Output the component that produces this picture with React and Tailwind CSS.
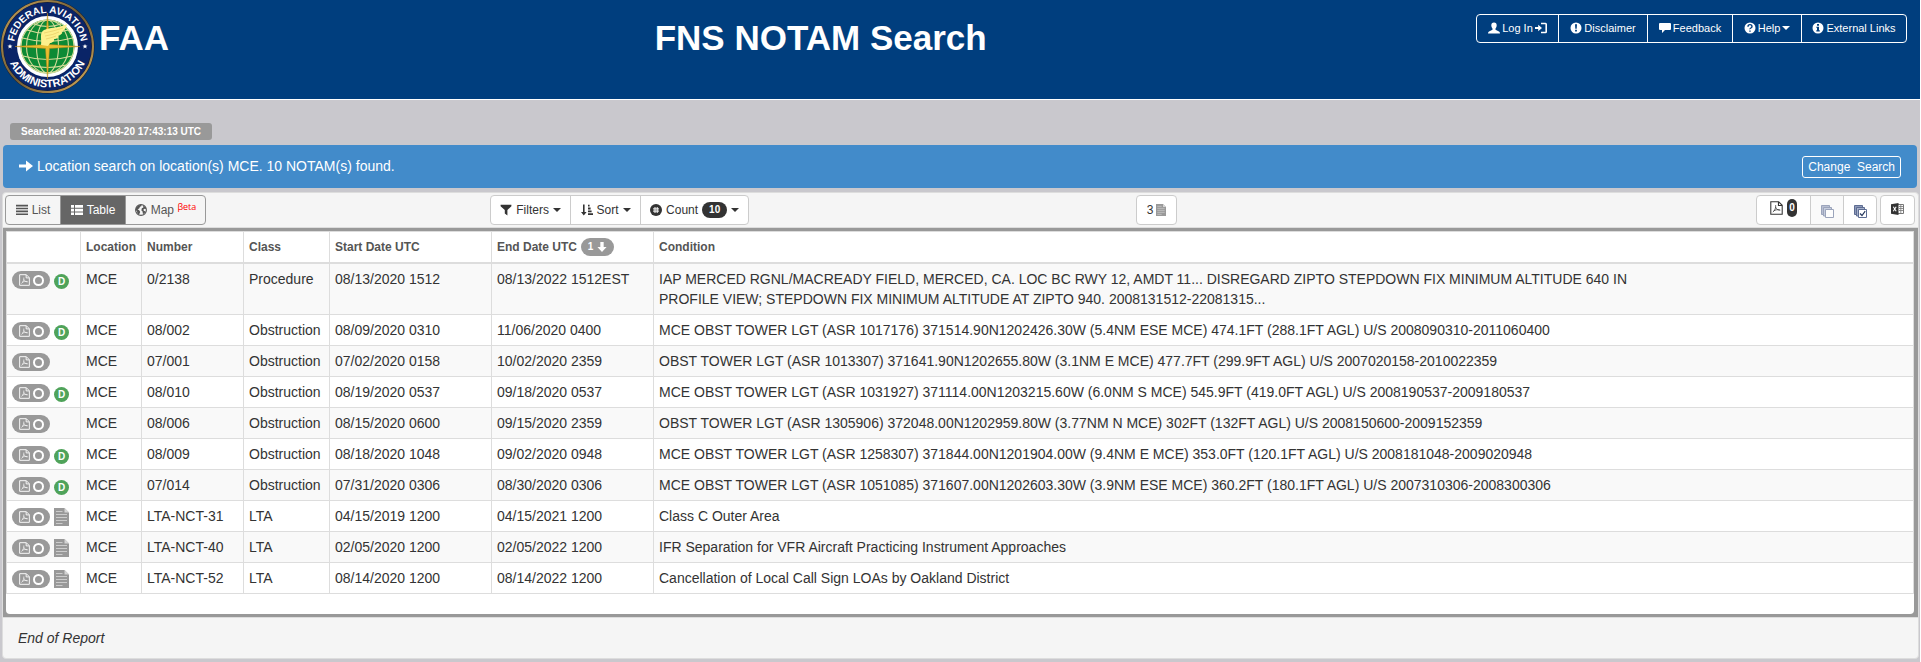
import React from "react";

const notams = [
  ["D", "0/2138", "Procedure", "08/13/2020 1512", "08/13/2022 1512EST", "IAP MERCED RGNL/MACREADY FIELD, MERCED, CA. LOC BC RWY 12, AMDT 11... DISREGARD ZIPTO STEPDOWN FIX MINIMUM ALTITUDE 640 IN PROFILE VIEW; STEPDOWN FIX MINIMUM ALTITUDE AT ZIPTO 940. 2008131512-22081315..."],
  ["D", "08/002", "Obstruction", "08/09/2020 0310", "11/06/2020 0400", "MCE OBST TOWER LGT (ASR 1017176) 371514.90N1202426.30W (5.4NM ESE MCE) 474.1FT (288.1FT AGL) U/S 2008090310-2011060400"],
  ["", "07/001", "Obstruction", "07/02/2020 0158", "10/02/2020 2359", "OBST TOWER LGT (ASR 1013307) 371641.90N1202655.80W (3.1NM E MCE) 477.7FT (299.9FT AGL) U/S 2007020158-2010022359"],
  ["D", "08/010", "Obstruction", "08/19/2020 0537", "09/18/2020 0537", "MCE OBST TOWER LGT (ASR 1031927) 371114.00N1203215.60W (6.0NM S MCE) 545.9FT (419.0FT AGL) U/S 2008190537-2009180537"],
  ["", "08/006", "Obstruction", "08/15/2020 0600", "09/15/2020 2359", "OBST TOWER LGT (ASR 1305906) 372048.00N1202959.80W (3.77NM N MCE) 302FT (132FT AGL) U/S 2008150600-2009152359"],
  ["D", "08/009", "Obstruction", "08/18/2020 1048", "09/02/2020 0948", "MCE OBST TOWER LGT (ASR 1258307) 371844.00N1201904.00W (9.4NM E MCE) 353.0FT (120.1FT AGL) U/S 2008181048-2009020948"],
  ["D", "07/014", "Obstruction", "07/31/2020 0306", "08/30/2020 0306", "MCE OBST TOWER LGT (ASR 1051085) 371607.00N1202603.30W (3.9NM ESE MCE) 360.2FT (180.1FT AGL) U/S 2007310306-2008300306"],
  ["doc", "LTA-NCT-31", "LTA", "04/15/2019 1200", "04/15/2021 1200", "Class C Outer Area"],
  ["doc", "LTA-NCT-40", "LTA", "02/05/2020 1200", "02/05/2022 1200", "IFR Separation for VFR Aircraft Practicing Instrument Approaches"],
  ["doc", "LTA-NCT-52", "LTA", "08/14/2020 1200", "08/14/2022 1200", "Cancellation of Local Call Sign LOAs by Oakland District"],
];

function Seal() {
  return (
    <svg viewBox="0 0 95 95" className="h-[95px] w-[95px] shrink-0" role="img" aria-label="Federal Aviation Administration">
      <defs>
        <linearGradient id="rim" x1="0" y1="0" x2="1" y2="1">
          <stop offset="0" stopColor="#c9a55a" />
          <stop offset="0.5" stopColor="#6d5a35" />
          <stop offset="1" stopColor="#d8ae5c" />
        </linearGradient>
        <path id="arcTop" d="M14.2 50 A33.5 33.5 0 1 1 80.8 50" />
        <path id="arcBottom" d="M6.5 46.5 A41 41 0 0 0 88.5 46.5" />
      </defs>
      <circle cx="47.5" cy="46.5" r="47" fill="#1a1c2c" />
      <circle cx="47.5" cy="46.5" r="45.5" fill="none" stroke="url(#rim)" strokeWidth="2" />
      <circle cx="47.5" cy="46.5" r="44" fill="#0a2467" />
      <circle cx="47.5" cy="46.5" r="30.5" fill="#fff" />
      <circle cx="47.5" cy="46.5" r="27" fill="#0d8a35" />
      <g fill="none" stroke="#d6dc9a" strokeWidth="1.1">
        <circle cx="47.5" cy="46.5" r="26.5" />
        <ellipse cx="47.5" cy="46.5" rx="11" ry="26.5" />
        <ellipse cx="47.5" cy="46.5" rx="21" ry="26.5" />
        <path d="M27 30 Q47.5 37 68 30M22.5 38 Q47.5 45 72.5 38M23 56 Q47.5 63 72 56M29 65 Q47.5 70 66 65M34 24 Q47.5 29 61 24" />
      </g>
      <path d="M47.5 13 L49.5 44.5 L80 46.5 L49.5 48.5 L47.5 79 L45.5 48.5 L15 46.5 L45.5 44.5Z" fill="#e9bd2f" stroke="#b7831b" strokeWidth="0.5" />
      <path d="M41 45 C42 39 39 33 44 30 C52 27 60 28 67 24 C66 29 64 31 61 32 C63 32 63 34 58 36 C60 37 57 39 54 39 C55 41 52 43 50 43 L48 46Z" fill="#fdf08c" />
      <path d="M44 33 Q54 31 63 28M45 36 Q53 35 59 32M46 39 Q51 38 56 36" fill="none" stroke="#e4c45c" strokeWidth="0.6" />
      <g fill="#fff" fontFamily="Liberation Sans, sans-serif" fontWeight="bold">
        <text fontSize="10"><textPath href="#arcTop" startOffset="50%" textAnchor="middle">FEDERAL AVIATION</textPath></text>
        <text fontSize="11"><textPath href="#arcBottom" startOffset="50%" textAnchor="middle">ADMINISTRATION</textPath></text>
      </g>
      <path d="M10 44 l.7 1.6 1.8.1-1.4 1.1.5 1.8L10 47.6l-1.6 1 .5-1.8-1.4-1.1 1.8-.1zM85 44l.7 1.6 1.8.1-1.4 1.1.5 1.8L85 47.6l-1.6 1 .5-1.8-1.4-1.1 1.8-.1z" fill="#fff" />
    </svg>
  );
}

function Icon({ children, className = "h-3 w-3" }) {
  return (
    <svg viewBox="0 0 12 12" className={"shrink-0 " + className} fill="currentColor" aria-hidden="true">
      {children}
    </svg>
  );
}

const UserIcon = () => <Icon><path d="M6 0.5C7.8.5 8.8 1.8 8.7 3.6 8.6 5 8.1 5.9 7.5 6.6V7.8L11 9.5Q12 10 12 11.5H0Q0 10 1 9.5L4.5 7.8V6.6C3.9 5.9 3.4 5 3.3 3.6 3.2 1.8 4.2.5 6 .5Z" /></Icon>;
const LoginIcon = () => <Icon><path d="M0 5H3.2V2.8L7 6 3.2 9.2V7H0ZM6 .8H10.5Q12 .8 12 2.3V9.7Q12 11.2 10.5 11.2H6V9.7H10.4V2.3H6Z" /></Icon>;
const Disc = ({ children }) => (
  <Icon>
    <circle cx="6" cy="6" r="5.5" />
    {children}
  </Icon>
);
const WarnIcon = () => <Disc><path d="M5 2.2H7L6.7 6.8H5.3ZM5.1 7.8H6.9V9.6H5.1Z" fill="#003e7e" /></Disc>;
const HelpIcon = () => <Disc><path d="M4 4.7Q4 2.6 6 2.6T8 4.5Q8 5.4 6.9 6T6 7.3M6 8.4V9.8" fill="none" stroke="#003e7e" strokeWidth="1.4" /></Disc>;
const InfoIcon = () => <Disc><path d="M5 2H7V3.7H5ZM4.3 4.7H7V8.3H7.8V9.5H4.3V8.3H5V5.8H4.3Z" fill="#003e7e" /></Disc>;
const CommentIcon = () => <Icon><path d="M1 1H11Q12 1 12 2V7Q12 8 11 8H6L3 11V8H1Q0 8 0 7V2Q0 1 1 1Z" /></Icon>;
const ArrowRight = () => <Icon className="h-[14px] w-[14px]"><path d="M0 4.8H6V1.2L12 6 6 10.8V7.2H0Z" /></Icon>;
const ListIcon = () => <Icon><path d="M0 .8H12V2.4H0ZM0 3.7H12V5.3H0ZM0 6.6H12V8.2H0ZM0 9.5H12V11.1H0Z" /></Icon>;
const TableIcon = () => <Icon><path d="M0 1H3V3.7H0ZM4 1H12V3.7H4ZM0 4.7H3V7.4H0ZM4 4.7H12V7.4H4ZM0 8.4H3V11.1H0ZM4 8.4H12V11.1H4Z" /></Icon>;
const GlobeIcon = () => (
  <Icon>
    <circle cx="6" cy="6" r="5.4" fill="none" stroke="currentColor" strokeWidth="1.1" />
    <path d="M1.2 3.4Q3 .8 6 .8L6.6 2 5 2.8 4.2 4.4 2.6 5.2 4.4 6.6 5.2 8 4 10.8 2.4 9.4 2 7.2 .8 6ZM8 1.2L10.8 3.4 11.2 5 9.6 4.8 8.4 5.4 8.8 6.8 10.6 7.6 9 10 7.8 9.4 7.6 7.6 6.4 6.4 6.8 4.2 8.4 3.4Z" />
  </Icon>
);
const FilterIcon = () => <Icon><path d="M0.6 .8H11.4V2.2L7.4 6V11.4L4.8 9.6V6L.6 2.2Z" /></Icon>;
const SortIcon = () => <Icon><path d="M2 0.5H3.6V8H5.6L2.8 11.6 0 8H2ZM7 .8H8.6V2.6H7ZM7 3.6H9.6V5.4H7ZM7 6.4H10.6V8.2H7ZM7 9.2H12V11H7Z" /></Icon>;
const HashIcon = () => (
  <Icon>
    <circle cx="6" cy="6" r="6" />
    <path d="M5 3V9M7.2 3V9M3 4.9H9M3 7.1H9" fill="none" stroke="#fff" strokeWidth="1" />
  </Icon>
);
const ArrowDown = () => <Icon className="h-[10px] w-[10px]"><path d="M4 0H8V6H11.5L6 12 .5 6H4Z" /></Icon>;

function Caret() {
  return (
    <svg viewBox="0 0 8 4" className="h-1 w-2 shrink-0" fill="currentColor" aria-hidden="true">
      <path d="M0 0H8L4 4Z" />
    </svg>
  );
}

function PdfIcon({ className }) {
  return (
    <svg viewBox="0 0 12 13" className={"shrink-0 " + className} fill="none" stroke="currentColor" aria-hidden="true">
      <path d="M.7.7H8L11.3 4V12.3H.7ZM7.8.9V4.2H11" strokeWidth="1" />
      <path d="M2.6 10.3C4.5 9 5.6 6 5.2 3.8M5.3 5.8C6 7.8 7.6 8.6 9.6 8.5M3.4 9.2C5 8.2 7 7.8 9 8.2" strokeWidth="0.7" />
    </svg>
  );
}

function DocIcon({ className }) {
  return (
    <svg viewBox="0 0 15 18" className={"shrink-0 " + className} aria-hidden="true">
      <path d="M0 0H10.5L15 4.5V18H0Z" fill="#999" />
      <path d="M10.5 0L15 4.5H10.5Z" fill="#d5d5d5" />
      <path d="M2 3.5H8.5M2 6.5H13M2 9.5H13M2 12.5H13M2 15.5H8.5" stroke="#ccc" strokeWidth="1.1" />
    </svg>
  );
}

function CopyIcon({ checked = false }) {
  return (
    <svg viewBox="0 0 13 13" className={checked ? "h-[13px] w-[13px]" : "h-[13px] w-[13px] opacity-60"} aria-hidden="true">
      <path d="M.5.5H8.5V9.5H.5Z" fill="#8d99b8" stroke="#5d6c92" />
      <path d="M2.5 2.5H10.5V11H2.5Z" fill="#a5b0ca" stroke="#5d6c92" />
      <path d="M4.5 4.5H12.5V12.5H4.5Z" fill="#fff" stroke="#5d6c92" />
      {checked && <path d="M6 8.5L8 10.5 11.2 6.2" fill="none" stroke="#27395f" strokeWidth="1.2" />}
    </svg>
  );
}

function ExcelIcon() {
  return (
    <svg viewBox="0 0 13 12" className="h-3 w-[13px]" aria-hidden="true">
      <path d="M7 1.5H12.5V10.5H7" fill="#fff" stroke="#777" />
      <path d="M8 3.5H12M8 5.5H12M8 7.5H12M9.8 2V10" stroke="#777" strokeWidth="0.8" />
      <path d="M0 1.2L7.5 0V12L0 10.8Z" fill="#333" />
      <path d="M2.3 3.8L5.2 8.2M5.2 3.8L2.3 8.2" stroke="#fff" strokeWidth="1.1" />
    </svg>
  );
}

function NavItem({ children, className }) {
  return (
    <a href="#" className={"flex h-full items-center justify-center gap-[2px] pb-0.5 " + className}>
      {children}
    </a>
  );
}

function Tool({ children, className }) {
  return (
    <button type="button" className={"flex h-full items-center justify-center gap-1 " + className}>
      {children}
    </button>
  );
}

const cell = "border-r border-b border-[#ddd] p-[5px] align-top";
const head = "h-8 border-r border-b-2 border-[#ddd] px-[5px] text-left text-xs font-bold whitespace-nowrap text-[#555]";

export default function App() {
  return (
    <div className="bg-white pr-px font-['Liberation_Sans',Arial,sans-serif] text-sm leading-5 text-[#333]">
      <div className="min-h-screen bg-[#c9c8cd]">
        <header className="grid h-[100px] grid-cols-[34.1%_1fr_auto] border-b border-white bg-[#003e7e] text-white">
          <div className="flex">
            <Seal />
            <div className="pt-[18px] pl-1 text-[35px] leading-10 font-bold">FAA</div>
          </div>
          <h1 className="pt-[18px] text-[35px] leading-10 font-bold">FNS NOTAM Search</h1>
          <nav className="mt-[14px] mr-[13px] flex h-[29px] divide-x divide-white rounded border border-white text-[11px]">
            <NavItem className="w-[82px]"><UserIcon /> Log In <LoginIcon /></NavItem>
            <NavItem className="w-[89px]"><WarnIcon /> Disclaimer</NavItem>
            <NavItem className="w-[85px]"><CommentIcon /> Feedback</NavItem>
            <NavItem className="w-[69px]"><HelpIcon /> Help<Caret /></NavItem>
            <NavItem className="w-[104px]"><InfoIcon /> External Links</NavItem>
          </nav>
        </header>

        <div className="px-[10px] pt-[23px] pb-[5px]">
          <div className="flex h-[17px] w-fit items-center rounded-[3px] bg-[#999] px-[11px] text-[10px] font-bold text-white">
            Searched at: 2020-08-20 17:43:13 UTC
          </div>
        </div>

        <div className="mr-[3px] ml-[3px] flex h-[43px] items-center justify-between rounded bg-[#428bca] px-4 text-white">
          <div className="flex items-center gap-1 pb-0.5"><ArrowRight /> Location search on location(s) MCE. 10 NOTAM(s) found.</div>
          <button type="button" className="h-[22px] rounded-[3px] border border-white px-[5px] text-xs whitespace-pre">Change  Search</button>
        </div>

        <main className="mt-1 mr-px ml-0.5 rounded border border-[#ddd] bg-[#f5f5f5]">
          <div className="grid grid-cols-[25.4%_33.8%_1fr_auto] border-b border-[#ddd] py-0.5 pr-[3px] pl-0.5 text-xs">
            <div className="flex h-[30px] w-fit divide-x divide-[#999] overflow-hidden rounded border border-[#999] text-[#555]">
              <Tool className="w-[55px]"><ListIcon /> List</Tool>
              <Tool className="w-[65px] bg-[#666] text-white"><TableIcon /> Table</Tool>
              <Tool className="w-[79px]"><GlobeIcon /> <span>Map <sup className="font-['Open_Sans',sans-serif] text-[9px] text-[#f00]">βeta</sup></span></Tool>
            </div>
            <div className="flex h-[30px] w-fit divide-x divide-[#ccc] overflow-hidden rounded border border-[#ccc] bg-white">
              <Tool className="w-[80px]"><FilterIcon /> Filters <Caret /></Tool>
              <Tool className="w-[70px]"><SortIcon /> Sort <Caret /></Tool>
              <Tool className="w-[107px]"><HashIcon /> Count <span className="flex h-4 w-[25px] items-center justify-center rounded-full bg-[#333] text-[10px] font-bold text-white">10</span> <Caret /></Tool>
            </div>
            <div>
              <button type="button" className="flex h-[30px] w-[41px] items-center justify-center gap-0.5 rounded border border-[#ccc] bg-white" aria-label="3 documents">3 <DocIcon className="h-3 w-[10px]" /></button>
            </div>
            <div className="flex h-[30px] gap-[3px]">
              <div className="flex divide-x divide-[#ccc] overflow-hidden rounded border border-[#ccc] bg-white">
                <Tool className="w-[54px] pb-1"><PdfIcon className="h-[14px] w-[13px]" /><span className="flex h-[18px] w-[10px] items-center justify-center rounded-full bg-[#333] text-[10px] font-bold text-white">0</span></Tool>
                <button type="button" aria-label="Clear selection" className="flex w-[33px] items-center justify-center bg-[#fafafa] pt-0.5"><CopyIcon /></button>
                <button type="button" aria-label="Select all" className="flex w-[32px] items-center justify-center pt-0.5"><CopyIcon checked /></button>
              </div>
              <button type="button" aria-label="Export to Excel" className="flex w-[35px] items-center justify-center rounded border border-[#ccc] bg-white pb-0.5"><ExcelIcon /></button>
            </div>
          </div>

          <div className="border-[3px] border-r-4 border-[#999] bg-[#999]">
            <div className="rounded-b bg-white pb-5">
              <table className="w-full table-fixed border-separate border-spacing-0 border-t border-l border-[#ddd] bg-white">
                <colgroup>
                  <col className="w-[74px]" />
                  <col className="w-[61px]" />
                  <col className="w-[102px]" />
                  <col className="w-[86px]" />
                  <col className="w-[162px]" />
                  <col className="w-[162px]" />
                  <col />
                </colgroup>
                <thead>
                  <tr>
                    <th className={head} aria-label="Select"></th>
                    <th className={head}>Location</th>
                    <th className={head}>Number</th>
                    <th className={head}>Class</th>
                    <th className={head}>Start Date UTC</th>
                    <th className={head}>
                      <div className="flex items-center gap-1">
                        End Date UTC
                        <span className="flex h-[18px] w-[33px] items-center justify-center gap-1 rounded-full bg-[#999] text-[10px] text-white">1 <ArrowDown /></span>
                      </div>
                    </th>
                    <th className={head}>Condition</th>
                  </tr>
                </thead>
                <tbody>
                  {notams.map(([mark, number, kind, start, end, condition]) => (
                    <tr key={number} className="odd:bg-[#f9f9f9]">
                      <td className={cell}>
                        <div className="flex h-5 items-end gap-1">
                          <button type="button" aria-label={"Select " + number} className="flex h-[18px] w-[38px] items-center justify-center gap-[3px] rounded-full bg-[#999] text-white">
                            <PdfIcon className="h-3 w-[11px]" />
                            <span className="h-[11px] w-[11px] rounded-full border-2 border-white" />
                          </button>
                          {mark === "D" && <span className="flex h-[15px] w-[15px] items-center justify-center rounded-full bg-[#4fa35a] text-[10px] font-bold text-white">D</span>}
                          {mark === "doc" && <DocIcon className="h-[18px] w-[15px]" />}
                        </div>
                      </td>
                      <td className={cell}>MCE</td>
                      <td className={cell}>{number}</td>
                      <td className={cell}>{kind}</td>
                      <td className={cell}>{start}</td>
                      <td className={cell}>{end}</td>
                      <td className={cell}><div className="max-w-[1000px]">{condition}</div></td>
                    </tr>
                  ))}
                </tbody>
              </table>
            </div>
          </div>

          <footer className="flex h-[41px] items-center border-t border-[#ddd] px-[15px] italic">End of Report</footer>
        </main>
      </div>
    </div>
  );
}
